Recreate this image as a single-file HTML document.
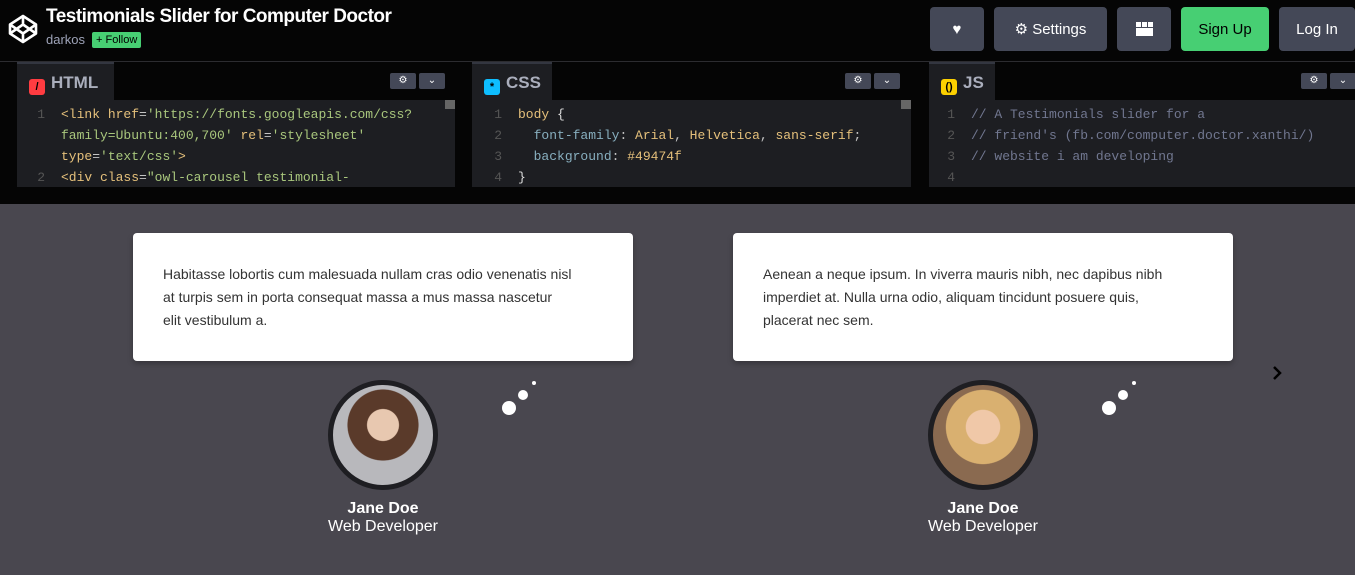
<!DOCTYPE html>
<html><head><style>
*{margin:0;padding:0;box-sizing:border-box}
body{width:1355px;height:575px;overflow:hidden;background:#49474f;font-family:"Liberation Sans",sans-serif;position:relative}
.hdr{position:absolute;left:0;top:0;width:1355px;height:62px;background:#050505;border-bottom:1px solid #2c2c30}
.title{position:absolute;left:46px;top:6px;color:#fff;font-size:19px;font-weight:bold;letter-spacing:-0.5px}
.user{position:absolute;left:46px;top:32px;color:#9ea3b8;font-size:13px}
.follow{position:absolute;left:92px;top:32px;background:#47cf73;color:#000;font-size:11px;padding:1px 4px;border-radius:2px;height:16px;line-height:14px}
.btn{position:absolute;top:7px;height:44px;border-radius:4px;background:#444857;color:#fff;font-size:15px;display:flex;align-items:center;justify-content:center}
.eds{position:absolute;left:0;top:62px;width:1355px;height:142px;background:#050505}
.pane{position:absolute;top:0;height:125px;background:#1d1e22;overflow:hidden}
.pane .top{position:absolute;left:0;top:0;right:0;height:38px;background:#050505}
.tab{position:absolute;left:0;top:0;height:38px;background:#1d1e22;border-top:2px solid #333640;color:#aaaebc;font-size:17px;font-weight:bold;padding:9px 0 0 12px}
.ic{display:inline-block;width:16px;height:16px;border-radius:3px;vertical-align:-2px;margin-right:6px;font-size:11px;text-align:center;line-height:16px;color:#000}
.sb{position:absolute;top:11px;height:16px;width:26px;background:#444857;border-radius:2px;color:#fff;font-size:10px;text-align:center;line-height:16px}
.code{position:absolute;left:0;top:42px;font-family:"Liberation Mono",monospace;font-size:13px;line-height:21px;color:#c4c4c4;white-space:pre}
.ln{display:inline-block;width:28px;text-align:right;color:#555;margin-right:16px}
.y{color:#e5c07b}.s{color:#a9c77d}.p{color:#ddd}.g{color:#88afbf}.c{color:#717790}
.card{position:absolute;top:233px;width:500px;height:128px;background:#fff;border-radius:4px;box-shadow:0 3px 6px rgba(0,0,0,.25);padding:30px 20px 30px 30px;font-size:14px;line-height:23px;color:#333;white-space:nowrap}
.av{position:absolute;top:380px;width:110px;height:110px;border-radius:50%;border:5px solid #1e1e22;background:radial-gradient(circle at 50% 40%,#e8c8b0 0 20%,#5a3a2a 21% 45%,#b8b8bc 46%)}
.nm{position:absolute;top:500px;width:200px;text-align:center;color:#fff;font-size:16px;line-height:18px}
.dots{position:absolute;top:380px}
</style></head><body>
<div class="hdr">
<svg style="position:absolute;left:7px;top:13px" width="32" height="32" viewBox="0 0 32 32" fill="none" stroke="#fff" stroke-width="2.6" stroke-linejoin="round"><path d="M16 3L29 11.5V20.5L16 29L3 20.5V11.5Z M16 3V11.5 M16 29V20.5 M3 11.5L16 20.5L29 11.5 M3 20.5L16 11.5L29 20.5"/></svg>
<div class="title">Testimonials Slider for Computer Doctor</div>
<div class="user">darkos</div>
<div class="follow">+ Follow</div>
<div class="btn" style="left:930px;width:54px">♥</div>
<div class="btn" style="left:994px;width:113px">⚙&nbsp;Settings</div>
<div class="btn" style="left:1117px;width:54px"><svg width="17" height="14"><rect x="0" y="0" width="5" height="5" fill="#fff"/><rect x="6" y="0" width="5" height="5" fill="#fff"/><rect x="12" y="0" width="5" height="5" fill="#fff"/><rect x="0" y="6" width="17" height="8" fill="#fff"/></svg></div>
<div class="btn" style="left:1181px;width:88px;background:#47cf73;color:#000">Sign Up</div>
<div class="btn" style="left:1279px;width:76px">Log In</div>
</div>
<div class="eds">
<div class="pane" style="left:17px;width:438px"><div class="top"></div><div class="tab" style="width:97px"><span class="ic" style="background:#ff3c41">/</span>HTML</div>
<div class="sb" style="left:373px">⚙</div><div class="sb" style="left:402px">⌄</div>
<div style="position:absolute;right:0;top:38px;width:10px;height:9px;background:#666"></div>
<div class="code"><span class="ln">1</span><span class="y">&lt;link</span> <span class="y">href</span>=<span class="s">'https://fonts.googleapis.com/css?</span>
<span class="ln"></span><span class="s">family=Ubuntu:400,700'</span> <span class="y">rel</span>=<span class="s">'stylesheet'</span>
<span class="ln"></span><span class="y">type</span>=<span class="s">'text/css'</span><span class="y">&gt;</span>
<span class="ln">2</span><span class="y">&lt;div</span> <span class="y">class</span>=<span class="s">"owl-carousel testimonial-</span></div></div>
<div class="pane" style="left:472px;width:439px"><div class="top"></div><div class="tab" style="width:80px"><span class="ic" style="background:#0ebeff">*</span>CSS</div>
<div class="sb" style="left:373px">⚙</div><div class="sb" style="left:402px">⌄</div>
<div style="position:absolute;right:0;top:38px;width:10px;height:9px;background:#666"></div>
<div class="code" style="left:2px"><span class="ln">1</span><span class="y">body</span> <span class="p">{</span>
<span class="ln">2</span>  <span class="g">font-family</span>: <span class="y">Arial</span>, <span class="y">Helvetica</span>, <span class="y">sans-serif</span>;
<span class="ln">3</span>  <span class="g">background</span>: <span class="y">#49474f</span>
<span class="ln">4</span><span class="p">}</span></div></div>
<div class="pane" style="left:929px;width:426px"><div class="top"></div><div class="tab" style="width:66px"><span class="ic" style="background:#fcd000">()</span>JS</div>
<div class="sb" style="left:372px">⚙</div><div class="sb" style="left:401px">⌄</div>
<div class="code" style="left:-2px"><span class="ln">1</span><span class="c">// A Testimonials slider for a</span>
<span class="ln">2</span><span class="c">// friend's (fb.com/computer.doctor.xanthi/)</span>
<span class="ln">3</span><span class="c">// website i am developing</span>
<span class="ln">4</span></div></div>
</div>
<div class="card" style="left:133px">Habitasse lobortis cum malesuada nullam cras odio venenatis nisl<br>at turpis sem in porta consequat massa a mus massa nascetur<br>elit vestibulum a.</div>
<div class="card" style="left:733px">Aenean a neque ipsum. In viverra mauris nibh, nec dapibus nibh<br>imperdiet at. Nulla urna odio, aliquam tincidunt posuere quis,<br>placerat nec sem.</div>
<div class="av" style="left:328px"></div>
<div class="av" style="left:928px;background:radial-gradient(circle at 50% 42%,#f0c8a8 0 22%,#d9b070 23% 48%,#8a6a50 49%)"></div>
<div class="nm" style="left:283px"><b>Jane Doe</b><br>Web Developer</div>
<div class="nm" style="left:883px"><b>Jane Doe</b><br>Web Developer</div>
<svg class="dots" style="left:500px" width="40" height="40"><circle cx="9" cy="28" r="7" fill="#fff"/><circle cx="23" cy="15" r="5" fill="#fff"/><circle cx="34" cy="3" r="2" fill="#fff"/></svg>
<svg class="dots" style="left:1100px" width="40" height="40"><circle cx="9" cy="28" r="7" fill="#fff"/><circle cx="23" cy="15" r="5" fill="#fff"/><circle cx="34" cy="3" r="2" fill="#fff"/></svg>
<svg style="position:absolute;left:1271px;top:365px" width="12" height="16"><path d="M3 2L9 8L3 14" stroke="#000" stroke-width="2.5" fill="none"/></svg>
</body></html>
